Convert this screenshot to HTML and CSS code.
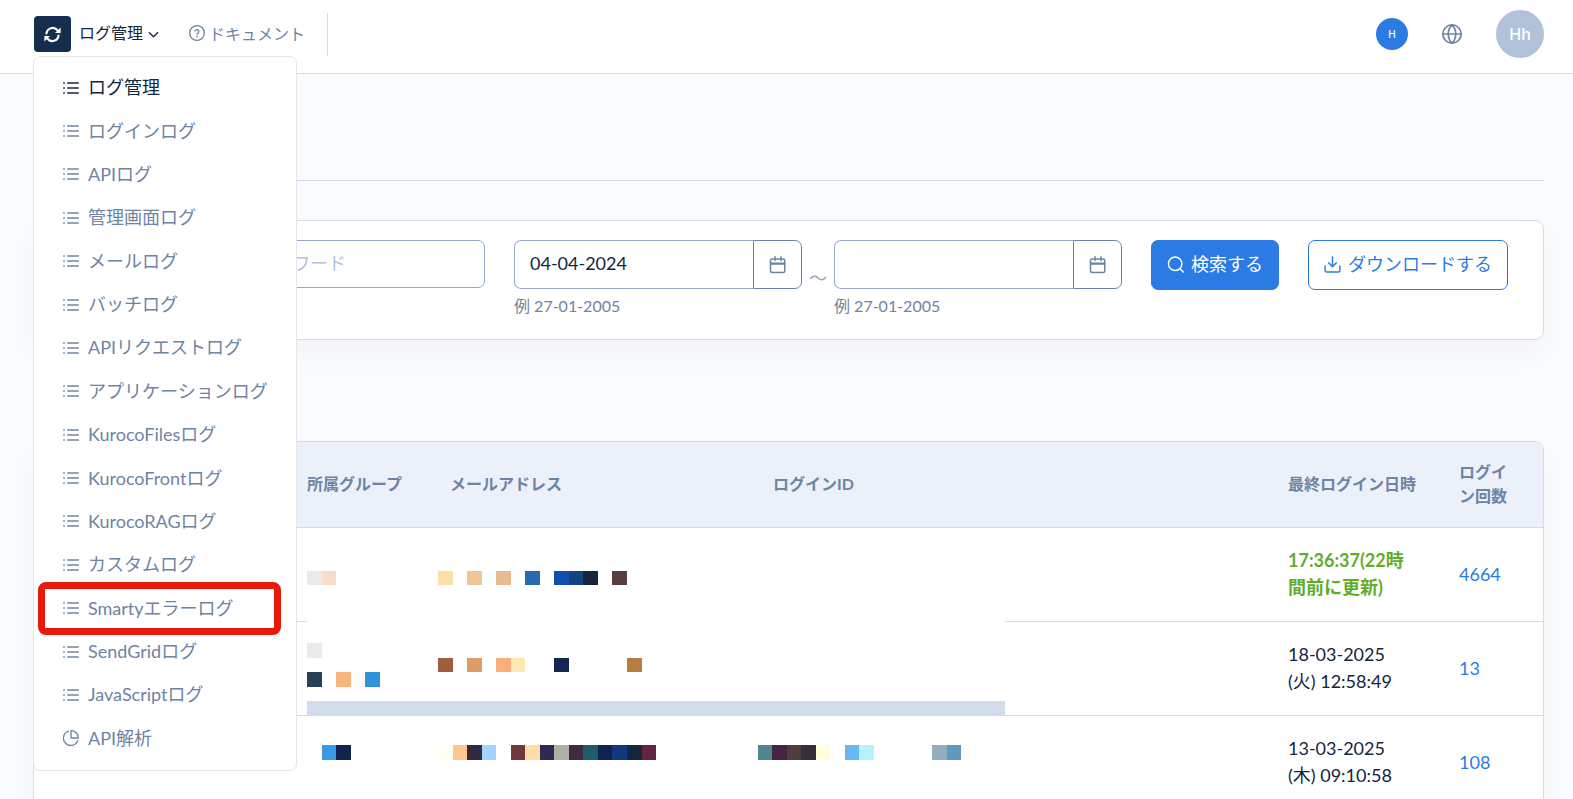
FILE: index.html
```html
<!DOCTYPE html>
<html lang="ja">
<head>
  <meta charset="UTF-8" />
  <title>ログ管理</title>
  <link rel="stylesheet" href="styles.css">
</head>
<body>
  <!-- Icons -->
  <svg class="sprite" aria-hidden="true">
    <symbol id="list" viewBox="0 0 24 24">
      <path d="M7 4.500h16M7 12h16M7 19.500h16M1 4.500h1M1 12h1M1 19.500h1" />
    </symbol>
    <symbol id="calendar" viewBox="0 0 24 24">
      <rect x="2" y="4" width="19" height="18" rx="2" />
      <path d="M16 1v5M8 1v5M2 9.500h19M2 10.500h19" />
    </symbol>
  </svg>

  <nav class="top-nav">
    <div class="brand">
      <button class="logo" type="button" aria-label="更新">
        <svg viewBox="0 0 24 24">
          <path d="M3.500 10.500a8.800 8.800 0 0 1 15.500-4.500l2 2.500M20.500 13.500a8.800 8.800 0 0 1-15.500 4.500l-2-2.500" />
          <path class="solid" d="M23.500 2v8h-8zM.5 22v-8h8z" />
        </svg>
      </button>
      <button class="menu-toggle" type="button">ログ管理
        <svg viewBox="0 0 12 12"><path d="M1.500 4l4.500 4.500L10.500 4" /></svg>
      </button>

      <ul class="menu">
        <li><a class="active" href="#"><svg><use href="#list" /></svg>ログ管理</a></li>
        <li><a href="#"><svg><use href="#list" /></svg>ログインログ</a></li>
        <li><a href="#"><svg><use href="#list" /></svg>APIログ</a></li>
        <li><a href="#"><svg><use href="#list" /></svg>管理画面ログ</a></li>
        <li><a href="#"><svg><use href="#list" /></svg>メールログ</a></li>
        <li><a href="#"><svg><use href="#list" /></svg>バッチログ</a></li>
        <li><a href="#"><svg><use href="#list" /></svg>APIリクエストログ</a></li>
        <li><a href="#"><svg><use href="#list" /></svg>アプリケーションログ</a></li>
        <li><a href="#"><svg><use href="#list" /></svg>KurocoFilesログ</a></li>
        <li><a href="#"><svg><use href="#list" /></svg>KurocoFrontログ</a></li>
        <li><a href="#"><svg><use href="#list" /></svg>KurocoRAGログ</a></li>
        <li><a href="#"><svg><use href="#list" /></svg>カスタムログ</a></li>
        <li class="marked"><a href="#"><svg><use href="#list" /></svg>Smartyエラーログ</a></li>
        <li><a href="#"><svg><use href="#list" /></svg>SendGridログ</a></li>
        <li><a href="#"><svg><use href="#list" /></svg>JavaScriptログ</a></li>
        <li><a href="#"><svg viewBox="0 0 24 24"><path d="M22 16A11 11 0 1 1 8 1.800M23 12A11 11 0 0 0 12 1v11z" /></svg>API解析</a></li>
      </ul>
    </div>

    <a class="docs" href="#">
      <svg viewBox="0 0 24 24"><circle cx="12" cy="12" r="11" /><path d="M9 9a3 3 0 0 1 5.800 1c0 2-2.900 2.500-2.900 4M12 17v1" /></svg>ドキュメント
    </a>

    <div class="account">
      <button class="badge" type="button">H</button>
      <button class="globe" type="button" aria-label="言語">
        <svg viewBox="0 0 24 24"><circle cx="12" cy="12" r="11" /><path d="M1 12h22M12 1c6 6 6 16 0 22M12 1c-6 6-6 16 0 22" /></svg>
      </button>
      <button class="avatar" type="button">Hh</button>
    </div>
  </nav>

  <main>
    <header class="page-header"></header>

    <form class="card search">
      <input class="keyword" type="text" placeholder="キーワード" aria-label="キーワード">
      <div class="range">
        <div class="date">
          <div class="date-group">
            <input id="from" type="text" value="04-04-2024">
            <button type="button" aria-label="開始日を選択"><svg><use href="#calendar" /></svg></button>
          </div>
          <label for="from">例 27-01-2005</label>
        </div>
        <span class="tilde">～</span>
        <div class="date">
          <div class="date-group">
            <input id="to" type="text">
            <button type="button" aria-label="終了日を選択"><svg><use href="#calendar" /></svg></button>
          </div>
          <label for="to">例 27-01-2005</label>
        </div>
      </div>
      <button class="btn primary" type="button">
        <svg viewBox="0 0 24 24"><circle cx="11.500" cy="11" r="9.500" /><path d="M18.500 18l4.500 4.500" /></svg>検索する
      </button>
      <button class="btn outline" type="button">
        <svg viewBox="0 0 24 24"><path d="M1.500 14v6.500a2 2 0 0 0 2 2h17a2 2 0 0 0 2-2V14M6.500 9.500L12 15l5.500-5.500M12 15V1" /></svg>ダウンロードする
      </button>
    </form>

    <div class="card table-card">
      <table>
        <thead>
          <tr>
            <th class="col-name"></th>
            <th class="col-group">所属グループ</th>
            <th class="col-mail">メールアドレス</th>
            <th>ログインID</th>
            <th class="col-date">最終ログイン日時</th>
            <th class="col-count">ログイン回数</th>
          </tr>
        </thead>
        <tbody>
          <tr>
            <td></td><td></td><td></td><td></td>
            <td class="recent">17:36:37(22時間前に更新)</td>
            <td><a href="#">4664</a></td>
          </tr>
          <tr>
            <td></td><td></td><td></td><td></td>
            <td>18-03-2025<br>(火) 12:58:49</td>
            <td><a href="#">13</a></td>
          </tr>
          <tr>
            <td></td><td></td><td></td><td></td>
            <td>13-03-2025<br>(木) 09:10:58</td>
            <td><a href="#">108</a></td>
          </tr>
        </tbody>
      </table>

      <!-- Mosaic over personal data -->
      <svg class="mosaic" viewBox="0 0 698 228" aria-hidden="true">
        <path fill="#fff" d="M0 43h698v185H0z" />
        <path fill="#e9eaeb" d="M0 0h15v14H0zM0 72h15v15H0z" />
        <path fill="#f8dccc" d="M15 0h14v14H15z" />
        <path fill="#ffdfa9" d="M131 0h15v14h-15z" />
        <path fill="#efc796" d="M160 0h15v14h-15z" />
        <path fill="#f7ffff" d="M175 0h14v14h-14z" />
        <path fill="#e8ba91" d="M189 0h15v14h-15z" />
        <path fill="#286ab0" d="M218 0h15v14h-15z" />
        <path fill="#104fac" d="M247 0h15v14h-15z" />
        <path fill="#12457f" d="M262 0h14v14h-14z" />
        <path fill="#14273f" d="M276 0h15v14h-15z" />
        <path fill="#573f3f" d="M305 0h15v14h-15z" />

        <path fill="#2a3f57" d="M0 101h15v15H0z" />
        <path fill="#f8b67c" d="M29 101h15v15H29z" />
        <path fill="#3091dc" d="M58 101h15v15H58z" />
        <path fill="#a25d3e" d="M131 87h15v14h-15z" />
        <path fill="#e09c66" d="M160 87h15v14h-15z" />
        <path fill="#f7b07b" d="M189 87h15v14h-15z" />
        <path fill="#ffe9b1" d="M204 87h14v14h-14z" />
        <path fill="#172454" d="M247 87h15v14h-15z" />
        <path fill="#b97c3f" d="M320 87h15v14h-15z" />
        <path fill="#d1ddeb" d="M0 130h698v15H0z" />

        <path fill="#3899e5" d="M15 174h14v15H15z" />
        <path fill="#132350" d="M29 174h15v15H29z" />
        <path fill="#fffff3" d="M131 174h15v15h-15z" />
        <path fill="#ffc78f" d="M146 174h14v15h-14z" />
        <path fill="#32293f" d="M160 174h15v15h-15z" />
        <path fill="#a1d5ff" d="M175 174h14v15h-14z" />
        <path fill="#6f393f" d="M204 174h14v15h-14z" />
        <path fill="#ffdca9" d="M218 174h15v15h-15z" />
        <path fill="#2b2c50" d="M233 174h14v15h-14z" />
        <path fill="#b1aea8" d="M247 174h15v15h-15z" />
        <path fill="#42293f" d="M262 174h14v15h-14z" />
        <path fill="#215c6b" d="M276 174h15v15h-15z" />
        <path fill="#122350" d="M291 174h14v15h-14z" />
        <path fill="#12387f" d="M305 174h15v15h-15z" />
        <path fill="#13273f" d="M320 174h15v15h-15z" />
        <path fill="#65243f" d="M335 174h14v15h-14z" />
        <path fill="#4f8690" d="M451 174h14v15h-14z" />
        <path fill="#472440" d="M465 174h15v15h-15z" />
        <path fill="#4e3f3f" d="M480 174h14v15h-14z" />
        <path fill="#382c3f" d="M494 174h15v15h-15z" />
        <path fill="#ffffd9" d="M509 174h14v15h-14z" />
        <path fill="#65baf3" d="M538 174h14v15h-14z" />
        <path fill="#b8f0ff" d="M552 174h15v15h-15z" />
        <path fill="#94afbb" d="M625 174h15v15h-15z" />
        <path fill="#5d9abb" d="M640 174h14v15h-14z" />
      </svg>
    </div>
  </main>
</body>
</html>
```

FILE: styles.css
```css
* {
  box-sizing: border-box;
}

body {
  margin: 0;
  height: 100vh;
  overflow: hidden;
  font-family: Lato, "Noto Sans CJK JP", sans-serif;
  font-size: 18px;
  line-height: 27px;
  color: #12263f;
  background-color: #f9fbfd;
}

a {
  color: #2c7be5;
  text-decoration: none;
}

button, input {
  font: inherit;
  color: inherit;
}

button {
  padding: 0;
  border: none;
  background: none;
  cursor: pointer;
}

svg {
  flex: none;
  fill: none;
  stroke: currentColor;
  stroke-width: 2;
  stroke-linecap: round;
  stroke-linejoin: round;
}

.sprite {
  display: none;
}

/* Top bar */
.top-nav {
  display: flex;
  align-items: center;
  padding: 10px 29px 15px 34px;
  background-color: #fff;
  border-bottom: 1px solid #d2ddec;
}

.brand {
  position: relative;
  display: flex;
  align-items: center;
  gap: 8px;
}

.logo {
  display: flex;
  align-items: center;
  justify-content: center;
  width: 37px;
  height: 36px;
  border-radius: 4px;
  color: #fff;
  background-color: #152e4d;
}

.logo svg {
  width: 17px;
  height: 17px;
  stroke-width: 3;
}

.logo .solid {
  fill: currentColor;
  stroke: none;
}

.menu-toggle {
  display: flex;
  align-items: center;
  gap: 5px;
  padding-bottom: 3px;
  font-size: 16px;
}

.menu-toggle svg {
  width: 11px;
  height: 11px;
  margin-top: 3px;
  stroke-width: 1.5;
}

.docs {
  display: flex;
  align-items: center;
  gap: 4px;
  margin-left: 30px;
  padding: 7px 22px 9px 0;
  border-right: 1px solid #d2ddec;
  font-size: 16px;
  color: #6e84a3;
}

.docs svg {
  width: 16px;
  height: 16px;
}

.account {
  display: flex;
  align-items: center;
  gap: 34px;
  margin-left: auto;
  font-family: Inter, sans-serif;
  font-weight: 500;
}

.badge {
  width: 32px;
  height: 32px;
  border-radius: 50%;
  font-size: 10px;
  font-weight: 500;
  color: #fff;
  background-color: #2c7be5;
}

.globe {
  display: flex;
  color: #6e84a3;
}

.globe svg {
  width: 20px;
  height: 20px;
}

.avatar {
  width: 48px;
  height: 48px;
  border-radius: 50%;
  font-size: 16px;
  color: #fff;
  background-color: #b1c2d9;
}

/* Drop-down menu */
.menu {
  position: absolute;
  top: 100%;
  left: -1px;
  z-index: 10;
  display: grid;
  grid-auto-rows: 1fr;
  width: 264px;
  height: 715px;
  margin: 4px 0 0;
  padding: 9px 0 10px;
  list-style: none;
  background-color: #fff;
  border: 1px solid #e4e6ea;
  border-radius: 7px;
}

.menu li {
  position: relative;
  display: flex;
}

.menu a {
  display: flex;
  align-items: center;
  gap: 9px;
  padding-left: 29px;
  white-space: nowrap;
  color: #6e84a3;
}

.menu a.active {
  color: #12263f;
}

.menu svg {
  width: 16px;
  height: 16px;
}

.marked::after {
  content: "";
  position: absolute;
  inset: -5px 15px -5px 4px;
  border: 7px solid #e8190d;
  border-radius: 8px;
}

/* Page */
main {
  padding: 0 29px 0 33px;
}

.page-header {
  height: 107px;
  border-bottom: 1px solid #d2ddec;
}

.card {
  background-color: #fff;
  border: 1px solid #d2ddec;
  border-radius: 9px;
  box-shadow: 0 14px 28px rgba(18, 38, 63, 0.03);
}

/* Search form */
.search {
  display: flex;
  align-items: flex-start;
  gap: 29px;
  margin-top: 39px;
  padding: 19px 35px 21px 206px;
}

.search input {
  height: 48px;
  padding: 0 15px 3px;
  background-color: #fff;
  border: 1px solid #95aac9;
  border-radius: 7px;
}

.search input::placeholder {
  color: #b1c2d9;
}

.keyword {
  flex: 1;
  min-width: 0;
}

.range {
  display: flex;
}

.date {
  width: 288px;
}

.date-group {
  display: flex;
}

.search .date-group input {
  flex: 1;
  min-width: 0;
  height: 49px;
  border-right: none;
  border-radius: 7px 0 0 7px;
}

.date-group button {
  display: flex;
  align-items: center;
  justify-content: center;
  width: 49px;
  border: 1px solid #6e84a3;
  border-radius: 0 7px 7px 0;
  color: #6e84a3;
}

.date-group svg {
  width: 18px;
  height: 18px;
}

.date label {
  display: block;
  margin-top: 5px;
  font-size: 16px;
  line-height: 24px;
  color: #6e84a3;
}

.tilde {
  width: 32px;
  padding-top: 25px;
  text-align: center;
  color: #95aac9;
}

.btn {
  display: flex;
  align-items: center;
  gap: 7px;
  height: 50px;
  padding: 0 15px 2px;
  border: 1px solid #2c7be5;
  border-radius: 7px;
  white-space: nowrap;
}

.btn svg {
  width: 17px;
  height: 17px;
}

.primary {
  color: #fff;
  background-color: #2c7be5;
}

.outline {
  color: #2c7be5;
}

/* Log table */
.table-card {
  position: relative;
  margin-top: 101px;
}

table {
  width: 100%;
  table-layout: fixed;
  border-collapse: separate;
  border-spacing: 0;
}

th, td {
  padding: 19px 20px 20px;
  text-align: left;
  border-bottom: 1px solid #d2ddec;
}

th {
  padding: 18px 20px 19px;
  font-size: 16px;
  font-weight: bold;
  line-height: 24px;
  color: #6e84a3;
  background-color: #ecf1f9;
}

th:first-child {
  border-top-left-radius: 8px;
}

th:last-child {
  border-top-right-radius: 8px;
}

.col-name {
  width: 253px;
}

.col-group {
  width: 143px;
}

.col-mail {
  width: 323px;
}

.col-date {
  width: 171px;
}

.col-count {
  width: 104px;
  padding-right: 30px;
}

.recent {
  font-weight: bold;
  color: #5fae2b;
}

.mosaic {
  position: absolute;
  top: 129px;
  left: 273px;
  width: 698px;
  height: 228px;
  stroke: none;
}
```
